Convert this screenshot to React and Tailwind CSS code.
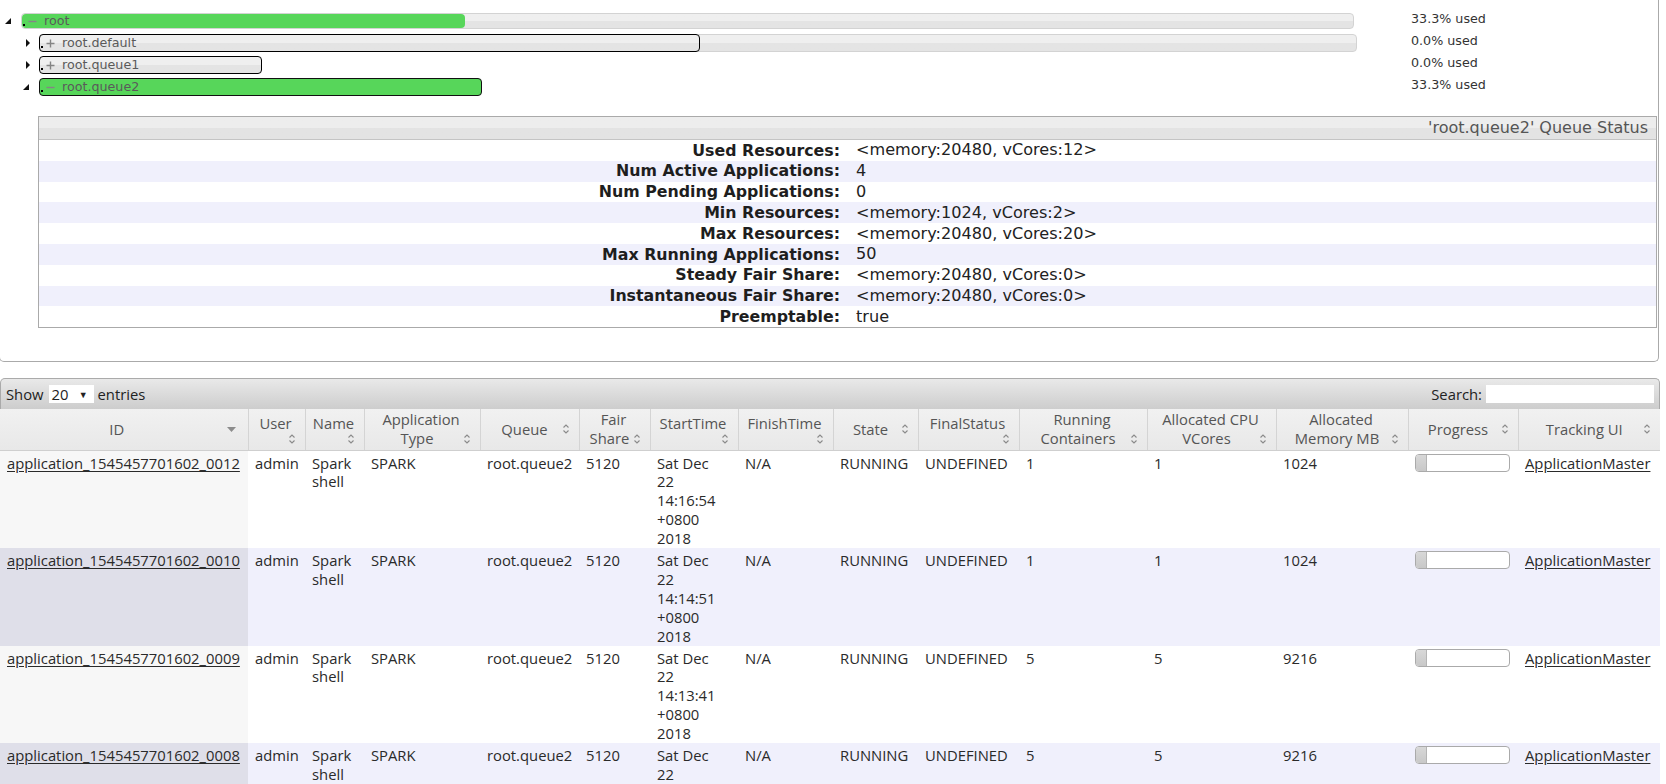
import React from 'react';

const dv = "font-['DejaVu_Sans',sans-serif]";
const os = "font-['Open_Sans',sans-serif]";

function OpenIcon() {
  return (
    <svg width="6" height="6" viewBox="0 0 6 6" className="shrink-0">
      <path d="M0 6 L6 6 L6 0 Z" fill="#111" />
    </svg>
  );
}
function ClosedIcon() {
  return (
    <svg width="4" height="8" viewBox="0 0 4 8" className="shrink-0">
      <path d="M0 0 L4 4 L0 8 Z" fill="#111" />
    </svg>
  );
}
function Sign({ plus }) {
  return (
    <svg width="9" height="9" viewBox="0 0 9 9" className="shrink-0">
      <path d={plus ? 'M0.5 4.5 H8.5 M4.5 0.5 V8.5' : 'M0.5 4.5 H8.5'} stroke="#858585" strokeWidth="1.4" fill="none" />
    </svg>
  );
}
function SortIcon() {
  return (
    <svg width="8" height="12" viewBox="0 0 8 12" className="shrink-0">
      <path d="M1.5 4.5 L4 2 L6.5 4.5 M1.5 7.5 L4 10 L6.5 7.5" fill="none" stroke="#8a8a8a" strokeWidth="1.1" />
    </svg>
  );
}
function DescIcon() {
  return (
    <svg width="9" height="5" viewBox="0 0 9 5" className="shrink-0">
      <path d="M0 0 H9 L4.5 5 Z" fill="#8c8c8c" />
    </svg>
  );
}

function BarLabel({ plus, name }) {
  return (
    <div className={`relative flex h-full items-center ${dv} text-[12.7px] leading-none`}>
      <span className="ml-[1px] mt-[7px] h-[2px] w-[2px] bg-black" />
      <span className="ml-[3px] flex items-center">
        <Sign plus={plus} />
      </span>
      <span className="ml-[7px] text-[#5a5a5a]">{name}</span>
    </div>
  );
}

function Pct({ children }) {
  return <div className={`${dv} text-[12.7px] text-[#333] -mt-[4px]`}>{children}</div>;
}

const statusRows = [
  ['Used Resources:', '<memory:20480, vCores:12>'],
  ['Num Active Applications:', '4'],
  ['Num Pending Applications:', '0'],
  ['Min Resources:', '<memory:1024, vCores:2>'],
  ['Max Resources:', '<memory:20480, vCores:20>'],
  ['Max Running Applications:', '50'],
  ['Steady Fair Share:', '<memory:20480, vCores:0>'],
  ['Instantaneous Fair Share:', '<memory:20480, vCores:0>'],
  ['Preemptable:', 'true'],
];

const cols = [
  { w: 'w-[248px]', lines: ['ID'], desc: true, pr: 'pr-[12px]' },
  { w: 'w-[57px]', lines: ['User', ''] },
  { w: 'w-[59px]', lines: ['Name', ''] },
  { w: 'w-[116px]', lines: ['Application', 'Type'] },
  { w: 'w-[99px]', lines: ['Queue'] },
  { w: 'w-[71px]', lines: ['Fair', 'Share'] },
  { w: 'w-[88px]', lines: ['StartTime', ''] },
  { w: 'w-[95px]', lines: ['FinishTime', ''] },
  { w: 'w-[85px]', lines: ['State'] },
  { w: 'w-[101px]', lines: ['FinalStatus', ''] },
  { w: 'w-[128px]', lines: ['Running', 'Containers'] },
  { w: 'w-[129px]', lines: ['Allocated CPU', 'VCores'] },
  { w: 'w-[132px]', lines: ['Allocated', 'Memory MB'] },
  { w: 'w-[110px]', lines: ['Progress'] },
  { w: 'w-[142px]', lines: ['Tracking UI'], last: true },
];

const apps = [
  { id: 'application_1545457701602_0012', time: '14:16:54', rc: '1', cpu: '1', mem: '1024' },
  { id: 'application_1545457701602_0010', time: '14:14:51', rc: '1', cpu: '1', mem: '1024' },
  { id: 'application_1545457701602_0009', time: '14:13:41', rc: '5', cpu: '5', mem: '9216' },
  { id: 'application_1545457701602_0008', time: '14:12:37', rc: '5', cpu: '5', mem: '9216' },
];

function Td({ children, className = '' }) {
  return <td className={`pl-[7px] pr-[2px] pt-[3px] pb-0 align-top leading-[18.9px] whitespace-nowrap ${className}`}>{children}</td>;
}

export default function App() {
  return (
    <div className="w-[1666px] min-h-[784px] bg-white text-[#222]">
      {/* Queue tree panel */}
      <div className="-ml-px h-[362px] w-[1660px] rounded-b-[5px] border-x border-b border-[#aaaaaa]">
        <div className="pt-[10px]">
          {/* root */}
          <div className="flex h-[22px] items-center">
            <div className="flex w-[1411px] items-center">
              <div className="flex w-[21px] items-center pl-[5px]">
                <OpenIcon />
              </div>
              <div className="relative h-[16px] w-[1333px] rounded-[4px] border border-[#d3d3d3] bg-linear-to-b from-[#efefef] from-50% to-[#e4e4e4] to-50%">
                <div className="absolute inset-y-0 left-0 w-[443px] rounded-[4px] bg-[#57d65a]" />
                <BarLabel name="root" />
              </div>
            </div>
            <Pct>33.3% used</Pct>
          </div>
          {/* root.default */}
          <div className="flex h-[22px] items-center">
            <div className="flex w-[1411px] items-center">
              <div className="flex w-[39px] items-center pl-[26px]">
                <ClosedIcon />
              </div>
              <div className="relative h-[18px] w-[1318px] rounded-[4px] border border-[#d3d3d3] bg-linear-to-b from-[#efefef] from-50% to-[#e4e4e4] to-50%">
                <div className="absolute -top-px -bottom-px -left-px w-[661px] rounded-[4px] border border-black" />
                <BarLabel plus name="root.default" />
              </div>
            </div>
            <Pct>0.0% used</Pct>
          </div>
          {/* root.queue1 */}
          <div className="flex h-[22px] items-center">
            <div className="flex w-[1411px] items-center">
              <div className="flex w-[39px] items-center pl-[26px]">
                <ClosedIcon />
              </div>
              <div className="relative h-[18px] w-[223px] rounded-[4px] border border-black bg-linear-to-b from-[#efefef] from-50% to-[#e4e4e4] to-50%">
                <BarLabel plus name="root.queue1" />
              </div>
            </div>
            <Pct>0.0% used</Pct>
          </div>
          {/* root.queue2 */}
          <div className="flex h-[22px] items-center">
            <div className="flex w-[1411px] items-center">
              <div className="flex w-[39px] items-center pl-[23px]">
                <OpenIcon />
              </div>
              <div className="relative h-[18px] w-[443px] rounded-[4px] border border-[#111] bg-[#57d65a]">
                <BarLabel name="root.queue2" />
              </div>
            </div>
            <Pct>33.3% used</Pct>
          </div>
        </div>

        {/* Queue status */}
        <div className={`ml-[38px] mr-[1px] mt-[18px] border border-[#aaaaaa] ${dv}`}>
          <div className="flex h-[23px] items-center justify-end border-b border-[#c4c4c4] bg-linear-to-b from-[#ededed] from-50% to-[#e3e3e3] to-50% pr-[8px] text-[16px] text-[#555]">
            'root.queue2' Queue Status
          </div>
          {statusRows.map(([k, v], i) => (
            <div key={k} className={`flex h-[20.8px] items-center ${i % 2 === 1 ? 'bg-[#f0f0fc]' : 'bg-white'}`}>
              <div className="w-[801px] text-right text-[15.8px] font-bold text-[#1e1e1e]">{k}</div>
              <div className="pl-[16px] text-[16.1px] text-[#222]">{v}</div>
            </div>
          ))}
        </div>
      </div>

      {/* Applications table */}
      <div className={`mt-[16px] w-[1660px] ${os} text-[14.8px]`}>
        <div className="flex h-[31px] items-center justify-between rounded-t-[5px] border border-b-0 border-[#aaaaaa] bg-linear-to-b from-[#e9e9e9] to-[#cdcdcd] pl-[5px] pr-[5px] text-[#222]">
          <div className="flex items-center">
            <span>Show</span>
            <span className="ml-[5px] flex h-[18px] w-[45px] items-center justify-between bg-white pl-[3px] pr-[6px] leading-none">
              <span>20</span>
              <span className="text-[9px]">▼</span>
            </span>
            <span className="ml-[4px]">entries</span>
          </div>
          <div className="flex items-center">
            <span>Search:</span>
            <span className="ml-[4px] h-[18px] w-[168px] bg-white" />
          </div>
        </div>
        <table className="w-[1660px] table-fixed border-collapse">
          <thead>
            <tr className="h-[41px] bg-linear-to-b from-[#f1f1f1] to-[#e8e8e8] text-[#555]">
              {cols.map((c, i) => {
                const last = c.lines[c.lines.length - 1];
                return (
                  <th key={i} className={`${c.w} p-0 align-middle font-normal ${c.last ? '' : 'border-r border-[#d4d4d4]'} border-b border-b-[#cfcfcf]`}>
                    <div className={`pl-[7px] ${c.pr || 'pr-[9px]'} leading-[19px]`}>
                      {c.lines.slice(0, -1).map((l) => (
                        <div key={l} className="text-center whitespace-nowrap">{l}</div>
                      ))}
                      <div className="flex items-center">
                        <span className="flex-1 text-center whitespace-nowrap">{last}</span>
                        {c.desc ? <DescIcon /> : <SortIcon />}
                      </div>
                    </div>
                  </th>
                );
              })}
            </tr>
          </thead>
          <tbody className="text-[#2a2a2a]">
            {apps.map((a, i) => {
              const even = i % 2 === 1;
              return (
                <tr key={a.id} className={even ? 'bg-[#f0f0fc]' : 'bg-white'}>
                  <Td className={even ? 'bg-[#dfdfe9]' : 'bg-[#f7f7f7]'}>
                    <span className="underline underline-offset-2">{a.id}</span>
                  </Td>
                  <Td>admin</Td>
                  <Td>
                    Spark
                    <br />
                    shell
                  </Td>
                  <Td>SPARK</Td>
                  <Td>root.queue2</Td>
                  <Td>5120</Td>
                  <Td>
                    Sat Dec
                    <br />
                    22
                    <br />
                    {a.time}
                    <br />
                    +0800
                    <br />
                    2018
                  </Td>
                  <Td>N/A</Td>
                  <Td>RUNNING</Td>
                  <Td>UNDEFINED</Td>
                  <Td>{a.rc}</Td>
                  <Td>{a.cpu}</Td>
                  <Td>{a.mem}</Td>
                  <Td>
                    <div className="flex h-[18px] w-[95px] overflow-hidden rounded-[4px] border border-[#aaaaaa] bg-white">
                      <div className="h-full w-[11px] border-r border-[#b5b5b5] bg-linear-to-b from-[#d8d8d8] to-[#c8c8c8]" />
                    </div>
                  </Td>
                  <Td>
                    <span className="underline underline-offset-2">ApplicationMaster</span>
                  </Td>
                </tr>
              );
            })}
          </tbody>
        </table>
      </div>
    </div>
  );
}
